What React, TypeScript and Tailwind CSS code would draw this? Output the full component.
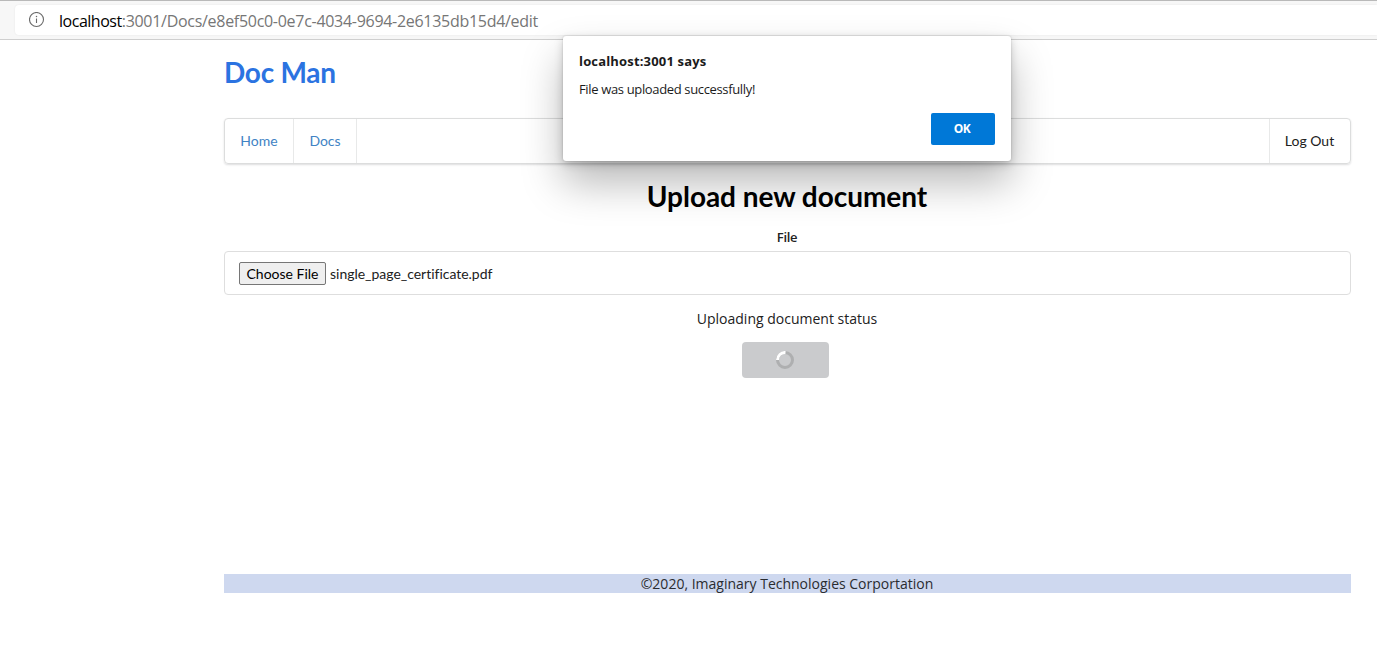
import React from "react";

const lato = "font-['Lato',sans-serif]";
const openSans = "font-['Open_Sans',sans-serif]";

function AddressBar() {
  return (
    <div className="h-10 border-t border-b border-t-[#b9b9b9] border-b-[#cfcfcf] bg-[#f7f7f7] pt-1 pl-[15px]">
      <div className="flex h-[30px] items-center rounded-l bg-white pl-[14px] shadow-[0_0_2px_rgba(0,0,0,0.08)]">
        <svg className="h-4 w-4 shrink-0" viewBox="0 0 16 16" fill="none">
          <circle cx="7.5" cy="7.5" r="7" stroke="#6a6a6a" strokeWidth="1.1" />
          <path d="M7.5 6.5V11" stroke="#6a6a6a" strokeWidth="1.1" />
          <circle cx="7.5" cy="4.6" r="0.75" fill="#6a6a6a" />
        </svg>
        <span className="ml-[14px] pt-0.5 font-['Open_Sans',sans-serif] text-base leading-5 tracking-[-0.29px] whitespace-nowrap text-[#767676]">
          <span className="tracking-[-0.48px] text-black">localhost</span>:3001/Docs/e8ef50c0-0e7c-4034-9694-2e6135db15d4/edit
        </span>
      </div>
    </div>
  );
}

function AlertDialog() {
  return (
    <div
      role="alertdialog"
      className="absolute top-9 left-[563px] flex h-[125px] w-[448px] flex-col rounded-[3px] bg-white px-4 pt-4 pb-4 font-['Open_Sans',sans-serif] shadow-[0_0_2px_rgba(0,0,0,0.2),0_3px_10px_rgba(0,0,0,0.18),0_22px_42px_rgba(0,0,0,0.28)]"
    >
      <div className="h-[18px] text-[13px] leading-[18px] font-bold tracking-[0.17px] text-[#1b1b1b]">
        <span>localhost:3001 says</span>
      </div>
      <div className="mt-2.5 h-[18px] text-[13px] leading-[18px] tracking-[-0.35px] text-[#1b1b1b]">
        <span>File was uploaded successfully!</span>
      </div>
      <button className="mt-auto h-8 w-16 self-end rounded-[2px] bg-[#0078d7] pr-0.5 text-xs font-bold tracking-[-0.5px] text-white">
        OK
      </button>
    </div>
  );
}

export default function App() {
  return (
    <div className="relative h-[652px] w-[1377px] overflow-hidden bg-white">
      <AddressBar />
      <main className="ml-56 flex h-[553px] w-[1127px] flex-col">
        <h1 className={`${lato} mt-[14px] h-9 text-[28px] leading-9 font-bold tracking-[-0.25px] text-[#2b73e1]`}>
          <span>Doc Man</span>
        </h1>
        <nav
          className={`${lato} mt-7 flex h-[46px] rounded border border-[#dcdddd] text-sm text-[#4183c4] shadow-[0_1px_2px_rgba(34,36,38,0.15)]`}
        >
          <a className="flex w-[69px] items-center justify-center border-r border-[#e8e9e9]">Home</a>
          <a className="flex w-[63px] items-center justify-center border-r border-[#e8e9e9]">Docs</a>
          <a className="ml-auto flex w-[81px] items-center justify-center border-l border-[#e8e9e9] pr-px text-[#212121]">
            Log Out
          </a>
        </nav>
        <h2 className={`${lato} mt-[14px] h-9 pr-px text-center text-[28px] leading-9 font-bold tracking-[-0.04px] text-black`}>
          <span>Upload new document</span>
        </h2>
        <label className={`${openSans} mt-[14px] h-[18px] pr-px text-center text-[13px] leading-[18px] font-semibold tracking-[-0.3px] text-[#212121]`}>
          <span>File</span>
        </label>
        <div className={`${lato} mt-[5px] flex h-11 items-center rounded border border-[#dedede] pl-[14px] text-sm`}>
          <button className="h-[23px] w-[87px] rounded-[2px] border border-[#767676] bg-[#efefef] pt-px leading-5 text-black">
            Choose File
          </button>
          <span className="ml-1 pt-0.5 tracking-[-0.02px] text-[#212121]">single_page_certificate.pdf</span>
        </div>
        <p className={`${openSans} mt-[14px] h-5 pr-px text-center text-sm leading-5 text-[#212121]`}>
          <span>Uploading document status</span>
        </p>
        <button className="mt-[13px] ml-[518px] flex h-9 w-[87px] items-center justify-center rounded bg-[#cacbcd] pr-px">
          <svg className="h-[18px] w-[18px]" viewBox="0 0 18 18" fill="none" strokeWidth="3">
            <circle cx="9" cy="9" r="7.5" stroke="#aeafb0" />
            <path d="M1.5 9A7.5 7.5 0 0 1 9.5 1.5" stroke="#fff" />
          </svg>
        </button>
        <footer className={`${openSans} mt-auto h-[19px] bg-[#ced8ef] pr-px text-center text-sm leading-[19px] text-[#2a2c30]`}>
          <span>©2020, Imaginary Technologies Corportation</span>
        </footer>
      </main>
      <AlertDialog />
    </div>
  );
}
